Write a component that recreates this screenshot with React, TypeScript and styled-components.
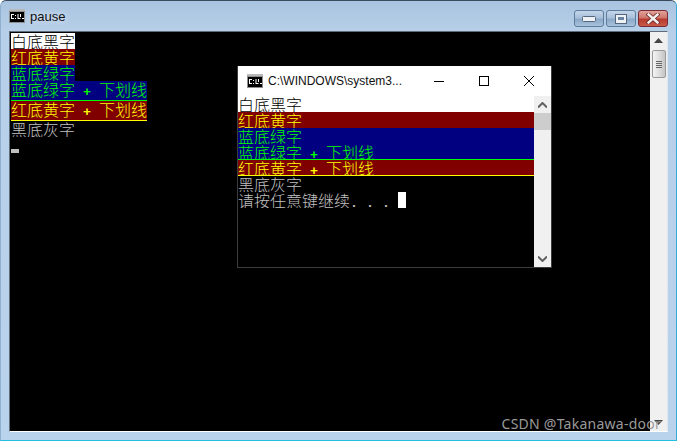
import styled, { createGlobalStyle } from "styled-components";

const GlobalStyle = createGlobalStyle`
  html, body {
    margin: 0;
    padding: 0;
    background: #fff;
  }
`;

const CJK = `"Noto Sans CJK SC", "Liberation Mono", monospace`;

const Desktop = styled.div`
  position: relative;
  width: 677px;
  height: 442px;
  overflow: hidden;
  background: #fff;
`;

// outer aero window
const AeroWindow = styled.div`
  height: 441px;
  box-sizing: border-box;
  display: flex;
  flex-direction: column;
  border-radius: 6px 6px 0 0;
  border-top: 1px solid #3a4a5c;
  border-right: 1px solid #3aa8d8;
  border-bottom: 1px solid #22c0e0;
  border-left: 1px solid #8fb0d0;
  background: linear-gradient(180deg, #a9c4e0 0px, #b7cfe8 30px, #bad3ec 100%);
  padding: 0 8px 8px 8px;
`;

const AeroTitle = styled.div`
  height: 30px;
  display: flex;
  align-items: center;
  gap: 5px;
  font: 12px "Liberation Sans", Arial, sans-serif;
  color: #111;
`;

const AeroLabel = styled.span`
  flex: 1;
  text-shadow: 0 0 6px rgba(255, 255, 255, 0.8);
  font-size: 13px;
`;

const AeroButtons = styled.div`
  display: flex;
  gap: 2px;
  align-self: flex-start;
  margin-top: 9px;
`;

const AeroButton = styled.div<{ $close?: boolean }>`
  width: ${(p) => (p.$close ? 30 : 30)}px;
  height: 17px;
  box-sizing: border-box;
  border: 1px solid ${(p) => (p.$close ? "#7a2a35" : "#5e7c9c")};
  border-radius: 3px;
  display: flex;
  align-items: center;
  justify-content: center;
  background: ${(p) =>
    p.$close
      ? "linear-gradient(180deg, #e0a29a 0%, #d0776c 45%, #b8392f 55%, #c85a48 100%)"
      : "linear-gradient(180deg, #c4d6ea 0%, #a9c0da 45%, #8ba8c8 55%, #a8c2dc 100%)"};
`;

const AeroBody = styled.div`
  flex: 1;
  min-height: 0;
  display: flex;
  border: 1px solid #5f6d7a;
  border-bottom-color: #fff;
  border-right-color: #dfe6ee;
`;

const Console = styled.div`
  flex: 1;
  background: #000;
  font-size: 16px;
  line-height: 16px;
  font-family: ${CJK};
  color: #c0c0c0;
  white-space: pre;
`;

const OuterConsole = styled(Console)`
  padding: 1px 0 0 1px;
`;

const Row = styled.div<{ $bg?: string; $fg?: string; $under?: boolean; $block?: boolean }>`
  display: ${(p) => (p.$block ? "block" : "table")};
  height: 16px;
  background: ${(p) => p.$bg ?? "transparent"};
  color: ${(p) => p.$fg ?? "#c0c0c0"};
  box-shadow: ${(p) => (p.$under ? `inset 0 -1px 0 ${p.$fg}` : "none")};
  font-weight: 300;
  overflow: hidden;
`;

// half width cells, 8px wide
const Half = styled.span`
  font-family: "Liberation Mono", monospace;
  font-size: 13.33px;
  font-weight: 700;
`;

const OuterCursor = styled.div`
  width: 8px;
  height: 4px;
  margin-top: 12px;
  background: #c0c0c0;
`;

const Scrollbar = styled.div<{ $w: number }>`
  width: ${(p) => p.$w}px;
  flex: none;
  background: #f0f0f0;
  display: flex;
  flex-direction: column;
  align-items: center;
`;

const ScrollEnd = styled.div`
  height: 17px;
  flex: none;
  display: flex;
  align-items: center;
  justify-content: center;
`;

const Spacer = styled.div`
  flex: 1;
`;

const Win7Thumb = styled.div`
  width: 14px;
  height: 28px;
  margin-top: 1px;
  box-sizing: border-box;
  border: 1px solid #9a9a9a;
  border-radius: 2px;
  background: linear-gradient(90deg, #f4f4f4, #dedede 50%, #c4c4c4);
  display: flex;
  flex-direction: column;
  gap: 1px;
  align-items: center;
  justify-content: center;
`;

const Grip = styled.div`
  width: 6px;
  height: 1px;
  background: #666;
`;

const Win10Thumb = styled.div`
  width: 17px;
  height: 17px;
  background: #cdcdcd;
`;

// overlapping window, its place on the desktop is the content
const PopupWindow = styled.div`
  position: absolute;
  left: 237px;
  top: 66px;
  width: 315px;
  height: 202px;
  box-sizing: border-box;
  display: flex;
  flex-direction: column;
  border: 1px solid #3c3c3c;
  border-top: none;
  background: #000;
`;

const PopupTitle = styled.div`
  height: 30px;
  flex: none;
  background: #fff;
  display: flex;
  align-items: center;
  padding-left: 9px;
  font: 12px "Liberation Sans", Arial, sans-serif;
  color: #111;
`;

const PopupLabel = styled.span`
  flex: 1;
  margin-left: 5px;
`;

const PopupControl = styled.div`
  width: 45px;
  height: 30px;
  display: flex;
  align-items: center;
  justify-content: center;
`;

const PopupBody = styled.div`
  flex: 1;
  display: flex;
  min-height: 0;
`;

const PressCursor = styled.span`
  display: inline-block;
  width: 8px;
  height: 16px;
  background: #fff;
  vertical-align: top;
`;

const Watermark = styled.div`
  position: absolute;
  right: 16px;
  top: 414px;
  font: 14px "Noto Sans", "Open Sans", sans-serif;
  color: #9a9a9a;
  letter-spacing: 0.25px;
`;

const ConsoleIcon = () => (
  <svg width="16" height="14" viewBox="0 0 16 14">
    <rect x="0" y="0" width="16" height="14" fill="#8f8f8f" />
    <rect x="0" y="0" width="16" height="2" fill="#b8b8b8" />
    <rect x="1" y="3" width="14" height="10" fill="#000" />
    <rect x="2" y="5" width="3" height="1" fill="#fff" />
    <rect x="2" y="5" width="1" height="5" fill="#fff" />
    <rect x="2" y="9" width="3" height="1" fill="#fff" />
    <rect x="6" y="6" width="1" height="1" fill="#fff" />
    <rect x="6" y="9" width="1" height="1" fill="#fff" />
    <path d="M8.5 5h1v4h2v1h-3zM11 5h1v3h-1z" fill="#fff" />
    <rect x="13" y="9" width="2" height="1" fill="#fff" />
  </svg>
);

const Up = ({ color }: { color: string }) => (
  <svg width="9" height="6" viewBox="0 0 9 6">
    <path d="M0 5.5 L4.5 1 L9 5.5" fill="none" stroke={color} strokeWidth="2" />
  </svg>
);

const Down = ({ color }: { color: string }) => (
  <svg width="9" height="6" viewBox="0 0 9 6">
    <path d="M0 .5 L4.5 5 L9 .5" fill="none" stroke={color} strokeWidth="2" />
  </svg>
);

type Line = { bg?: string; fg?: string; under?: boolean; cjk: string; mark?: string; tail?: string };

const RED = "#800000";
const BLUE = "#000080";
const YELLOW = "#ffff00";
const GREEN = "#00ff00";

const lines: Line[] = [
  { bg: "#fff", fg: "#000", cjk: "白底黑字" },
  { bg: RED, fg: YELLOW, cjk: "红底黄字" },
  { bg: BLUE, fg: GREEN, cjk: "蓝底绿字" },
  { bg: BLUE, fg: GREEN, under: true, cjk: "蓝底绿字", mark: " + ", tail: "下划线" },
  { bg: RED, fg: YELLOW, under: true, cjk: "红底黄字", mark: " + ", tail: "下划线" },
  { cjk: "黑底灰字" },
];

const Lines = ({ block }: { block?: boolean }) => (
  <>
    {lines.map((l, i) => (
      <Row key={i} $bg={l.bg} $fg={l.fg} $under={l.under} $block={block}>
        {l.cjk}
        {l.mark && <Half>{l.mark}</Half>}
        {l.tail}
      </Row>
    ))}
  </>
);

export default function App() {
  return (
    <Desktop>
      <GlobalStyle />
      <AeroWindow>
        <AeroTitle>
          <ConsoleIcon />
          <AeroLabel>pause</AeroLabel>
          <AeroButtons>
            <AeroButton>
              <svg width="14" height="6" viewBox="0 0 14 6">
                <rect x=".5" y=".5" width="13" height="5" rx="1" fill="#eef2f6" stroke="#54677c" />
              </svg>
            </AeroButton>
            <AeroButton>
              <svg width="12" height="10" viewBox="0 0 12 10">
                <rect x=".5" y=".5" width="11" height="9" fill="#eef2f6" stroke="#54677c" />
                <rect x="3" y="3" width="6" height="3" fill="#6a84a0" />
              </svg>
            </AeroButton>
            <AeroButton $close>
              <svg width="14" height="11" viewBox="0 0 14 11">
                <path d="M2.5 1.5 L11.5 9.5 M11.5 1.5 L2.5 9.5" stroke="#6d2a2a" strokeWidth="4" strokeLinecap="square" />
                <path d="M2.5 1.5 L11.5 9.5 M11.5 1.5 L2.5 9.5" stroke="#f4f0ee" strokeWidth="2.4" strokeLinecap="square" />
              </svg>
            </AeroButton>
          </AeroButtons>
        </AeroTitle>
        <AeroBody>
          <OuterConsole>
            <Lines />
            <OuterCursor />
          </OuterConsole>
          <Scrollbar $w={17}>
            <ScrollEnd>
              <svg width="9" height="5" viewBox="0 0 9 5">
                <path d="M4.5 0 L9 5 H0 Z" fill="#444" />
              </svg>
            </ScrollEnd>
            <Win7Thumb>
              <Grip />
              <Grip />
              <Grip />
              <Grip />
            </Win7Thumb>
            <Spacer />
            <ScrollEnd>
              <svg width="9" height="5" viewBox="0 0 9 5">
                <path d="M4.5 5 L9 0 H0 Z" fill="#444" />
              </svg>
            </ScrollEnd>
          </Scrollbar>
        </AeroBody>
      </AeroWindow>

      <PopupWindow>
        <PopupTitle>
          <ConsoleIcon />
          <PopupLabel>C:\WINDOWS\system3...</PopupLabel>
          <PopupControl>
            <svg width="10" height="10" viewBox="0 0 10 10">
              <path d="M0 5.5 H10" stroke="#000" strokeWidth="1" />
            </svg>
          </PopupControl>
          <PopupControl>
            <svg width="10" height="10" viewBox="0 0 10 10">
              <rect x=".5" y=".5" width="9" height="9" fill="none" stroke="#000" />
            </svg>
          </PopupControl>
          <PopupControl>
            <svg width="10" height="10" viewBox="0 0 10 10">
              <path d="M0 0 L10 10 M10 0 L0 10" stroke="#000" strokeWidth="1" />
            </svg>
          </PopupControl>
        </PopupTitle>
        <PopupBody>
          <Console>
            <Lines block />
            <Row $block>
              请按任意键继续<Half>. . . </Half>
              <PressCursor />
            </Row>
          </Console>
          <Scrollbar $w={17}>
            <ScrollEnd>
              <Up color="#606060" />
            </ScrollEnd>
            <Win10Thumb />
            <Spacer />
            <ScrollEnd>
              <Down color="#606060" />
            </ScrollEnd>
          </Scrollbar>
        </PopupBody>
      </PopupWindow>

      <Watermark>CSDN @Takanawa-door</Watermark>
    </Desktop>
  );
}
